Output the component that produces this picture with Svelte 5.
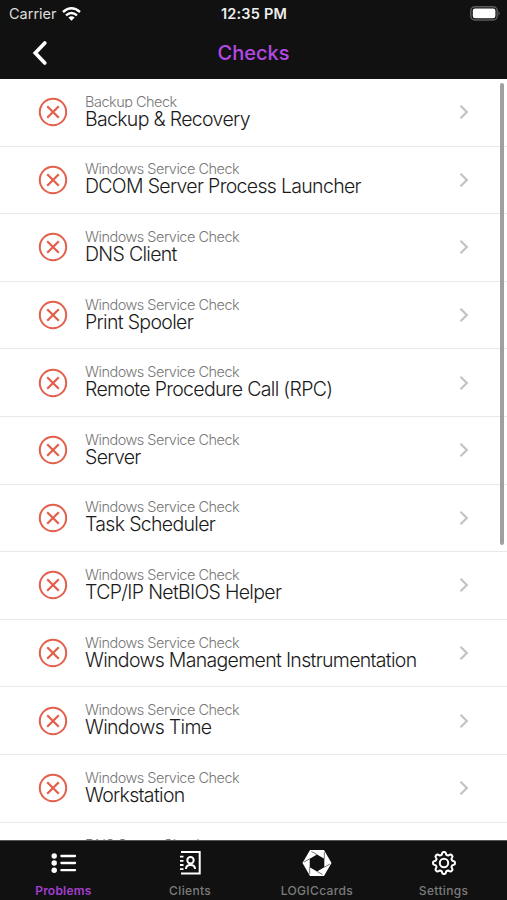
<script lang="ts">
	const checks = [
		{ type: "Backup Check", name: "Backup & Recovery" },
		{ type: "Windows Service Check", name: "DCOM Server Process Launcher" },
		{ type: "Windows Service Check", name: "DNS Client" },
		{ type: "Windows Service Check", name: "Print Spooler" },
		{ type: "Windows Service Check", name: "Remote Procedure Call (RPC)" },
		{ type: "Windows Service Check", name: "Server" },
		{ type: "Windows Service Check", name: "Task Scheduler" },
		{ type: "Windows Service Check", name: "TCP/IP NetBIOS Helper" },
		{ type: "Windows Service Check", name: "Windows Management Instrumentation" },
		{ type: "Windows Service Check", name: "Windows Time" },
		{ type: "Windows Service Check", name: "Workstation" },
		{ type: "DNS Server Check", name: "" },
	];
	const tabs = ["Problems", "Clients", "LOGICcards", "Settings"];
	let activeTab = $state("Problems");

	// outline of the settings gear, eight rounded teeth
	const gear = Array.from({ length: 96 }, (_, i) => {
		const a = (i / 96) * Math.PI * 2;
		const r = 9.7 + 1.3 * Math.tanh(2.2 * Math.cos(a * 8));
		return `${(13 + r * Math.sin(a)).toFixed(2)},${(13 - r * Math.cos(a)).toFixed(2)}`;
	}).join(" ");
</script>

<div class="app">
	<header>
		<div class="status">
			<div class="carrier">
				<span>Carrier</span>
				<svg width="19" height="14" viewBox="0 0 19 14">
					<g fill="none" stroke="#fff" stroke-width="2.4">
						<path d="M1 5 Q9.5 -2.4 18 5" />
						<path d="M4 8.3 Q9.5 3.6 15 8.3" />
					</g>
					<path d="M6.4 10.5 Q9.5 8 12.6 10.5 L9.5 13.8Z" fill="#fff" />
				</svg>
			</div>
			<span class="time">12:35 PM</span>
			<svg class="battery" width="31" height="15" viewBox="0 0 31 15">
				<rect x=".8" y=".8" width="26.4" height="13.2" rx="4" fill="none" stroke="#5c5c5c" stroke-width="1.5" />
				<rect x="2.8" y="2.6" width="22.6" height="9.6" rx="2.2" fill="#fff" />
				<path d="M28.6 5 Q30.6 7.4 28.6 9.8Z" fill="#6c6c6c" />
			</svg>
		</div>
		<nav>
			<button class="back" aria-label="Back">
				<svg width="16" height="26" viewBox="0 0 16 26">
					<path d="M12.8 3 L3.3 13 L12.8 23" fill="none" stroke="#fff" stroke-width="3.7" stroke-linecap="round" />
				</svg>
			</button>
			<h1>Checks</h1>
		</nav>
	</header>

	<main>
		{#each checks as check}
			<div class="row">
				<svg class="error" width="30" height="30" viewBox="0 0 30 30">
					<g fill="none" stroke="#e2604c" stroke-width="2">
						<circle cx="15" cy="15" r="13.2" />
						<path d="M9.2 9.2 L20.8 20.8 M20.8 9.2 L9.2 20.8" stroke-width="2.3" />
					</g>
				</svg>
				<div class="text">
					<div class="type">{check.type}</div>
					<div class="name">{check.name}</div>
				</div>
				<svg class="chevron" width="10" height="16" viewBox="0 0 10 16">
					<path d="M1.5 1.8 L7.8 8 L1.5 14.2" fill="none" stroke="#c4c4c6" stroke-width="2.3" />
				</svg>
			</div>
		{/each}
		<div class="scrollbar"></div>
	</main>

	<footer>
		{#each tabs as tab}
			<button class="tab" class:active={tab === activeTab} onclick={() => (activeTab = tab)}>
				{#if tab === "Problems"}
					<svg width="28" height="26" viewBox="0 0 28 26">
						<g fill="#fff">
							<circle cx="5.2" cy="6" r="2.7" />
							<circle cx="5.2" cy="13" r="2.7" />
							<circle cx="5.2" cy="20.2" r="2.7" />
						</g>
						<path d="M12.4 6H26M12.4 13H26M12.4 20.2H26" stroke="#fff" stroke-width="2.3" stroke-linecap="round" />
					</svg>
				{:else if tab === "Clients"}
					<svg width="26" height="26" viewBox="0 0 26 26">
						<g fill="none" stroke="#fff">
							<path d="M4 2H22.7V23.5H4" stroke-width="2" />
							<path d="M3 6.7H6.5M3 10.8H6.5M3 15H6.5M3 19.2H6.5" stroke-width="1.8" />
							<circle cx="13.5" cy="10.3" r="3.2" stroke-width="2" />
							<path d="M9 19Q9 15 13.5 15Q18 15 18 19" stroke-width="2" />
						</g>
					</svg>
				{:else if tab === "LOGICcards"}
					<svg width="30" height="26" viewBox="0 0 30 26">
						<path d="M8 0H22L29.5 13L22 26H8L.5 13Z" fill="#fff" />
						<path d="M15 4.6L22.3 8.8V17.2L15 21.4L7.7 17.2V8.8Z" fill="#111" />
						<g stroke="#111" stroke-width=".6">
							<path d="M15 4.6L9.4 1.4M7.7 8.8L2.1 12M7.7 17.2V23.8M15 21.4L20.6 24.6M22.3 17.2L27.9 14M22.3 8.8V2.2" />
						</g>
					</svg>
				{:else}
					<svg width="26" height="26" viewBox="0 0 26 26">
						<g fill="none" stroke="#fff" stroke-width="2">
							<polygon points={gear} stroke-linejoin="round" />
							<circle cx="13" cy="13" r="4.2" />
						</g>
					</svg>
				{/if}
				<span>{tab}</span>
			</button>
		{/each}
	</footer>
</div>

<style>
	:global(body) {
		margin: 0;
	}

	.app {
		display: flex;
		flex-direction: column;
		width: 507px;
		height: 900px;
		overflow: hidden;
		background: #fff;
		font-family: Inter, "Liberation Sans", sans-serif;
	}

	button {
		border: 0;
		padding: 0;
		background: none;
		font-family: inherit;
	}

	svg {
		display: block;
		flex: none;
	}

	header {
		flex: none;
		height: 79px;
		background: #111;
		color: #fff;
	}

	.status {
		display: grid;
		grid-template-columns: 1fr auto 1fr;
		align-items: center;
		height: 27px;
		padding: 0 6px 0 9px;
		font-size: 14.5px;
	}

	.carrier {
		display: flex;
		align-items: center;
		gap: 5px;
		color: #ddd;
		letter-spacing: 0;
	}

	.time {
		margin-right: 2px;
		color: #eee;
		font-weight: 600;
		letter-spacing: 0.2px;
	}

	.battery {
		justify-self: end;
	}

	nav {
		display: grid;
		grid-template-columns: 1fr auto 1fr;
		align-items: center;
		height: 51px;
	}

	.back {
		justify-self: start;
		padding-left: 32px;
	}

	h1 {
		margin: 0;
		color: #b44ae4;
		font-size: 20px;
		font-weight: 500;
	}

	main {
		position: relative;
		flex: 1;
		min-height: 0;
		overflow: hidden;
	}

	.row {
		display: flex;
		align-items: center;
		box-sizing: border-box;
		height: 67.6px;
		padding: 0 38px;
		border-bottom: 1px solid #e9e9e9;
	}

	.text {
		flex: 1;
		margin-left: 17px;
		font-family: Inter, "Liberation Sans", sans-serif;
		font-weight: 300;
		white-space: nowrap;
	}

	.type {
		height: 13px;
		overflow: hidden;
		color: #777;
		font-size: 14.5px;
		line-height: 13px;
		letter-spacing: -0.5px;
	}

	.name {
		height: 22px;
		color: #1a1a1a;
		font-size: 19.5px;
		line-height: 22px;
		letter-spacing: -0.68px;
	}

	.scrollbar {
		position: absolute;
		top: 4px;
		right: 3px;
		width: 4px;
		height: 462px;
		border-radius: 2px;
		background: #a0a0a0;
	}

	footer {
		display: grid;
		grid-template-columns: repeat(4, 1fr);
		box-sizing: border-box;
		flex: none;
		height: 60px;
		border-top: 1px solid #555;
		background: #111;
	}

	.tab {
		display: flex;
		flex-direction: column;
		align-items: center;
		gap: 7px;
		padding-top: 9px;
		color: #7c7c7c;
		font-size: 12px;
		font-weight: 500;
		letter-spacing: 0.35px;
	}

	.tab.active {
		color: #a33fd0;
		font-weight: 600;
		letter-spacing: 0.2px;
	}
</style>
